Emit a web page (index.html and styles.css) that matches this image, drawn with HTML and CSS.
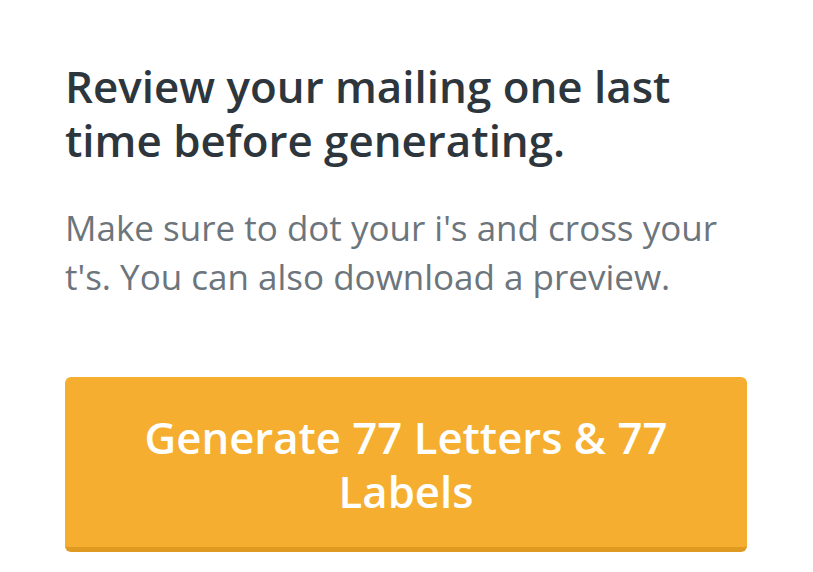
FILE: index.html
```html
<!DOCTYPE html>
<html lang="en">
<head>
<meta charset="utf-8">
<title>Review mailing</title>
<link rel="stylesheet" href="styles.css">
</head>
<body>
<main class="review">
  <h1 class="review-title">Review your mailing one last time before generating.</h1>
  <p class="review-text">Make sure to dot your i's and cross your t's. You can also download a preview.</p>
  <button class="generate-btn" type="button">Generate 77 Letters &amp; 77 Labels</button>
</main>
</body>
</html>
```
FILE: styles.css
```css
html, body {
  margin: 0;
  padding: 0;
  background: #ffffff;
}

body {
  font-family: "Open Sans", "Liberation Sans", sans-serif;
}

.review {
  width: 682px;
  padding: 59px 0 0 65px;
  display: flex;
  flex-direction: column;
}

.review-title {
  margin: 0;
  font-size: 43.9px;
  line-height: 54px;
  font-weight: 600;
  color: #2d363c;
}

.review-text {
  margin: 37px 0 0 0;
  font-size: 35px;
  line-height: 48.5px;
  font-weight: 400;
  color: #6d757c;
}

.generate-btn {
  margin-top: 76px;
  width: 682px;
  padding: 33px 30px 29px;
  border: 0;
  border-bottom: 5px solid #df9a22;
  border-radius: 6px;
  background: #f6ae30;
  color: #ffffff;
  font-family: "Open Sans", "Liberation Sans", sans-serif;
  font-size: 43.7px;
  line-height: 54px;
  font-weight: 600;
  text-align: center;
}
```
